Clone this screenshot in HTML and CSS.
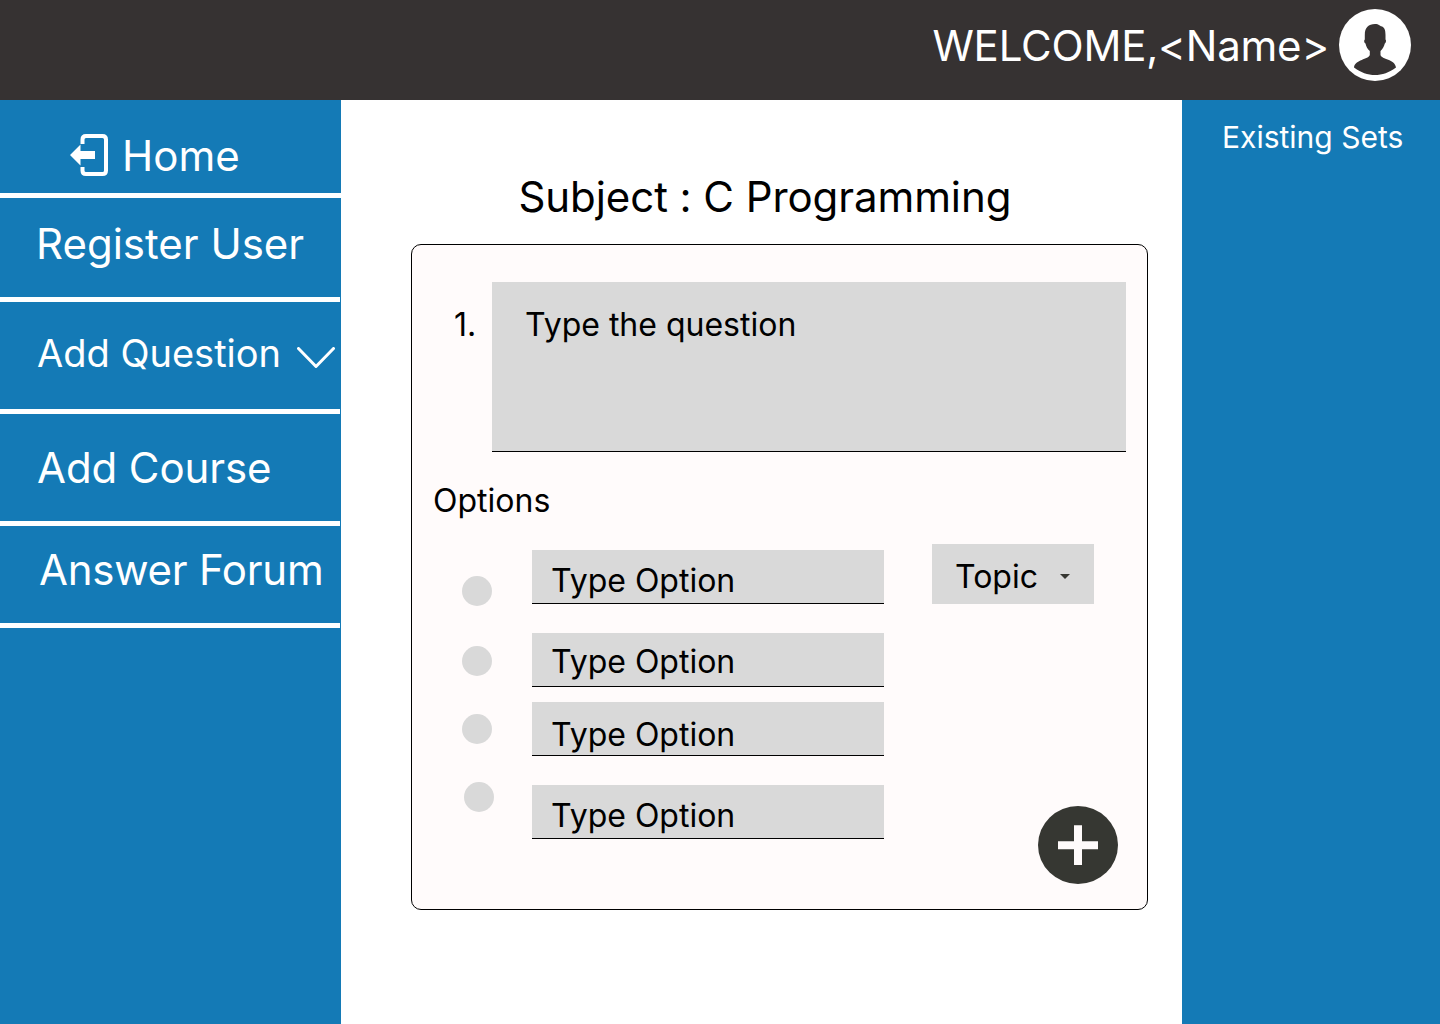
FILE: index.html
```html
<!DOCTYPE html>
<html lang="en">
<head>
<meta charset="utf-8">
<title>Question Sets</title>
<link rel="stylesheet" href="styles.css">
</head>
<body>
<header class="topbar">
  <span class="welcome">WELCOME,&lt;Name&gt;</span>
  <svg class="avatar" viewBox="0 0 72 72"><circle cx="36" cy="36" r="36" fill="#fff"/><path fill="#363232" d="M36 15C40 15 41 17 42 17.3C45.500 18 46.500 21 46.500 26V30.500C47.500 31 47 34 45.800 34.500C45 38 43.500 40 41.500 42V46C42.500 50.500 56 50 57 58.500C50.500 63.500 43 66 36 66S21.500 63.500 15 58.500C16 50.500 29.500 50.500 30.800 46V42C28.500 40 27.200 38 26.500 34.500C25 34 24.800 31 25.800 30.500V26C25.800 18.500 29.500 15 36 15Z"/></svg>
</header>
<div class="layout">
  <nav class="sidebar">
    <a class="item home"><svg class="exit" viewBox="0 0 40 44"><path d="M12.500 11V6.500Q12.500 3 16 3H32.500Q36 3 36 6.500V37.500Q36 41 32.500 41H16Q12.500 41 12.500 37.500V34" transform="translate(0 -1)" fill="none" stroke="#fff" stroke-width="4"/><path d="M0 21L10.500 10.500V17H25V25H10.500V31.500Z" fill="#fff"/></svg><span>Home</span></a>
    <a class="item register"><span>Register User</span></a>
    <a class="item question"><span>Add Question</span><svg class="chevron" viewBox="0 0 38 22"><path d="M1.500 1.500L19 19.500L36.500 1.500" fill="none" stroke="#fff" stroke-width="3" stroke-linecap="round" stroke-linejoin="round"/></svg></a>
    <a class="item course"><span>Add Course</span></a>
    <a class="item forum"><span>Answer Forum</span></a>
  </nav>
  <main class="content">
    <h1 class="subject">Subject : C Programming</h1>
    <section class="card">
      <div class="question-row">
        <span class="number">1.</span>
        <div class="question-field">Type the question</div>
      </div>
      <h2 class="options-title">Options</h2>
      <div class="options-row">
        <div class="radios"><i class="radio"></i><i class="radio"></i><i class="radio"></i><i class="radio last"></i></div>
        <div class="fields">
          <div class="field">Type Option</div>
          <div class="field second">Type Option</div>
          <div class="field third">Type Option</div>
          <div class="field fourth">Type Option</div>
        </div>
        <div class="side">
          <div class="topic"><span>Topic</span><svg class="caret" viewBox="0 0 10 5"><path d="M0 0H10L5 5Z" fill="#363732"/></svg></div>
          <svg class="add" viewBox="0 0 80 78"><ellipse cx="40" cy="39" rx="40" ry="39" fill="#363732"/><path d="M36 19.300H44V35.300H60V43.300H44V59H36V43.300H20V35.300H36Z" fill="#fffbfb"/></svg>
        </div>
      </div>
    </section>
  </main>
  <aside class="sets">Existing Sets</aside>
</div>
</body>
</html>
```
FILE: styles.css
```css
* { box-sizing: border-box; }
body { margin: 0; font-family: Inter, "Liberation Sans", sans-serif; color: #000; background: #fff; }
.topbar { height: 100px; background: #363232; color: #fff; display: flex; justify-content: flex-end; align-items: flex-start; padding: 9px 29px 0 0; }
.welcome { font-size: 42px; line-height: 50px; letter-spacing: -0.2px; margin: 12px 10px 0 0; white-space: nowrap; }
.avatar { width: 72px; height: 72px; }
.layout { display: grid; grid-template-columns: 341px 841px 258px; height: 924px; }
.sidebar { background: #147ab6; color: #fff; }
.item { display: flex; align-items: flex-start; width: 340px; border-bottom: 5px solid #fff; font-size: 42px; line-height: 50px; white-space: nowrap; }
.home { width: 341px; height: 98px; padding: 31px 0 0 70px; }
.exit { width: 40px; height: 44px; margin: 3px 12px 0 0; }
.register { height: 104px; padding: 21px 0 0 36px; }
.question { height: 112px; padding: 26px 0 0 37px; font-size: 38px; }
.chevron { flex: none; width: 38px; height: 22px; margin: 19px 0 0 16px; }
.course { height: 112px; padding: 29px 0 0 37px; letter-spacing: -0.1px; }
.forum { height: 102px; padding: 19px 0 0 39px; letter-spacing: -0.25px; }
.content { padding: 72px 0 0 70px; }
.subject { margin: 0 0 22px 107.5px; font-size: 42px; font-weight: 400; line-height: 50px; letter-spacing: -0.08px; white-space: nowrap; }
.card { width: 737px; height: 666px; border: 1px solid #000; border-radius: 10px; background: #fffbfb; font-size: 32px; line-height: 40px; padding: 37px 21px 0; }
.question-row { display: flex; justify-content: space-between; }
.number { padding: 23px 0 0 21px; }
.question-field { width: 634px; height: 170px; padding: 23px 33px 0; background: #d9d9d9; border-bottom: 1px solid #000; }
.options-title { margin: 29px 0 0; font-size: 32px; font-weight: 400; line-height: 40px; }
.options-row { display: flex; padding: 23px 0 0 29px; }
.radios { width: 70px; padding-top: 32px; }
.radio { display: block; width: 30px; height: 30px; margin-bottom: 38px; border-radius: 50%; background: #d9d9d9; }
.radio:first-child { margin-bottom: 40px; }
.last { margin-left: 2px; }
.fields { width: 400px; padding-top: 6px; }
.field { width: 352px; height: 54px; padding: 11px 19px 0; background: #d9d9d9; border-bottom: 1px solid #000; white-space: nowrap; }
.second { margin-top: 29px; padding-top: 9px; }
.third { margin-top: 15px; padding-top: 13px; }
.fourth { margin-top: 29px; padding-top: 11px; }
.side { width: 186px; }
.topic { width: 162px; height: 60px; display: flex; padding: 13px 0 0 23px; background: #d9d9d9; }
.caret { flex: none; width: 10px; height: 5px; margin: 17px 0 0 22px; }
.add { display: block; width: 80px; height: 78px; margin: 202px 0 0 106px; }
.sets { background: #147ab6; color: #fff; font-size: 30px; line-height: 36px; padding: 19px 0 0 40px; white-space: nowrap; }
```
